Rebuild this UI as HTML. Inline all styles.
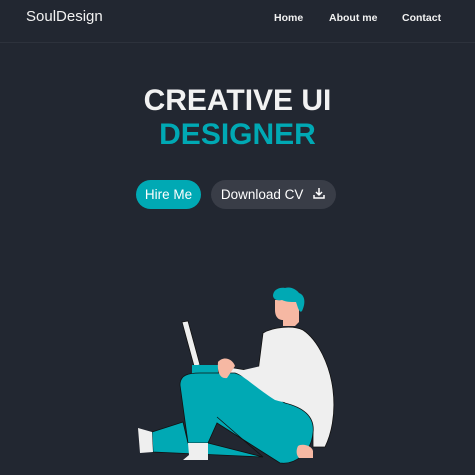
<!DOCTYPE html>
<html><head><style>
*{margin:0;padding:0;box-sizing:border-box}
body{width:475px;height:475px;background:#222731;font-family:"Liberation Sans",sans-serif;position:relative;overflow:hidden;color:#f0f0f0}
.nav{position:absolute;left:0;top:0;width:475px;height:43px;border-bottom:1px solid #2d323c}
.logo{position:absolute;left:26px;top:8px;font-size:15px;color:#f2f2f2}
.nav a{position:absolute;top:12px;font-size:10.5px;font-weight:bold;color:#f2f2f2;text-decoration:none}
h1{position:absolute;left:0;width:475px;text-align:center;font-size:30px;font-weight:bold;line-height:34px}
.b{position:absolute;top:180px;height:29px;border-radius:15px;font-size:13.5px;line-height:29px;text-align:center;color:#fff}
</style></head><body>
<div class="nav"><div class="logo">SoulDesign</div>
<a style="left:274px">Home</a><a style="left:329px">About me</a><a style="left:402px">Contact</a></div>
<h1 style="top:84px;color:#f2f2f2">CREATIVE UI</h1>
<h1 style="top:118px;color:#00a9b4">DESIGNER</h1>
<div class="b" style="left:136px;width:65px;background:#00a9b4">Hire Me</div>
<div class="b" style="left:211px;width:125px;background:#393d47">Download CV
<svg width="14" height="14" viewBox="0 0 14 14" style="vertical-align:-1px;margin-left:5px"><path d="M7 2v7M4 6l3 3 3-3M2 9v3h10V9" fill="none" stroke="#fff" stroke-width="1.5"/></svg></div>
<svg width="475" height="475" style="position:absolute;left:0;top:0">
<g stroke="#111" stroke-width="0.8">
<path d="M182 322l6-1 12 44-6 1z" fill="#efefef"/>
<path d="M192 365h26v9h-26z" fill="#00a9b4" stroke="none"/>
<path d="M152 432l31-10 5 21h20l55 14-110-5z" fill="#00a9b4"/>
<path d="M263 333c10-6 30-8 40-3 15 10 27 35 30 60 3 25-2 45-8 57l-12 0 0-20-70-35-25-15 10-10 30 5z" fill="#efefef"/>
<path d="M180 385c0-10 8-12 20-12h35c15 5 30 18 50 30 20 5 30 15 28 30-2 20-18 32-33 30l-63-40-9 20h-20z" fill="#00a9b4"/>
<path d="M217 417l46 40" fill="none"/>
<path d="M235 372c10 5 20 15 40 28 10 3 15 3 20 0l5-50-35 15z" fill="#efefef" stroke="none"/>
</g>
<path d="M218 362c5-6 14-4 17 4l-8 12c-6 1-10-4-9-16z" fill="#f6b8a3"/>
<path d="M298 446c5-3 14 0 15 5v7h-14c-3-3-3-8-1-12z" fill="#f6b8a3"/>
<path d="M138 428l14 4 1 20-13 1z" fill="#efefef"/>
<path d="M188 443h20v17h-25l6-5z" fill="#efefef"/>
<path d="M275 300h24v22l-4 4h-12v-6c-6 0-8-5-8-10z" fill="#f6b8a3"/>
<path d="M273 296c0-6 6-9 12-8 6-2 12 2 14 5 6 2 7 10 3 18-2 2-3-1-4-3l-2-6c-6 0-10 0-14-2-4 1-8 0-9-4z" fill="#00a9b4"/>
</svg>
</body></html>
